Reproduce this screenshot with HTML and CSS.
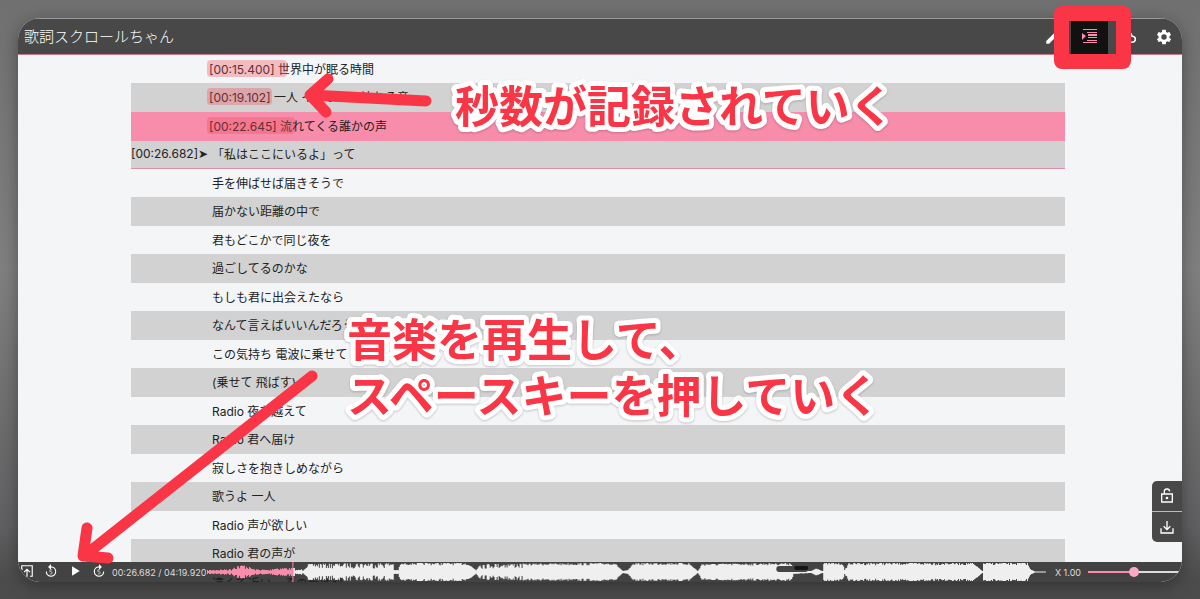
FILE: index.html
```html
<!DOCTYPE html>
<html lang="ja">
  <head>
    <meta charset="UTF-8" />
    <meta name="viewport" content="width=device-width, initial-scale=1.0" />
    <title>歌詞スクロールちゃん</title>

    <link rel="stylesheet" href="styles.css">
  </head>

  <body>
    <div class="app">
      <!-- Header -->
      <header class="header">
        <h1>歌詞スクロールちゃん</h1>
        <nav class="modes">
          <button class="mode" aria-label="編集">
            <svg viewBox="0 0 24 24"><path d="M3 17.200V21h3.800L17.800 9.900l-3.700-3.700L3 17.200zM20.700 7a1 1 0 0 0 0-1.400l-2.300-2.300a1 1 0 0 0-1.400 0l-1.800 1.800 3.700 3.700z" /></svg>
          </button>
          <button class="mode active" aria-label="タイミング">
            <svg viewBox="0 0 15 15"><path d="M1 0h14v1H1zM5 3h10v1H5zM6 5h9v2H6zM6 8h9v1H6zM5 11h10v1H5zM1 13h14v1H1zM0 4l4 3-4 4z" /></svg>
          </button>
          <button class="mode" aria-label="クラウド">
            <svg viewBox="0 0 24 24"><path d="M19.400 10A7.500 7.500 0 0 0 5.400 8 6 6 0 0 0 6 20h13a5 5 0 0 0 .4-10zM19 18H6a4 4 0 0 1 0-8h.7a5.500 5.500 0 0 1 10.800 1.500v.5H19a3 3 0 0 1 0 6z" /></svg>
          </button>
          <button class="mode" aria-label="設定">
            <svg viewBox="0 0 24 24"><path d="M19.140 12.940c.04-.3.06-.61.06-.94 0-.32-.02-.64-.07-.94l2.030-1.580c.18-.14.23-.41.12-.61l-1.920-3.320c-.12-.22-.37-.29-.59-.22l-2.390.96c-.5-.38-1.030-.7-1.620-.94l-.36-2.540c-.04-.24-.24-.41-.48-.41h-3.840c-.24 0-.43.17-.47.41l-.36 2.540c-.59.24-1.130.57-1.620.94l-2.390-.96c-.22-.08-.47 0-.59.22L2.740 8.870c-.12.21-.08.47.12.61l2.030 1.580c-.05.3-.09.63-.09.94s.02.64.07.94l-2.030 1.580c-.18.14-.23.41-.12.61l1.920 3.320c.12.22.37.29.59.22l2.390-.96c.5.38 1.030.7 1.620.94l.36 2.540c.05.24.24.41.48.41h3.840c.24 0 .44-.17.47-.41l.36-2.540c.59-.24 1.130-.56 1.620-.94l2.390.96c.22.08.47 0 .59-.22l1.920-3.320c.12-.22.07-.47-.12-.61l-2.010-1.580zM12 15.600A3.600 3.600 0 1 1 12 8.400a3.600 3.600 0 0 1 0 7.200z" /></svg>
          </button>
        </nav>
      </header>

      <!-- Lyrics -->
      <main class="content">
        <ol class="lyrics">
          <li class="stamped"><span class="line short">[00:15.400] 世界中が眠る時間</span></li>
          <li class="stamped"><span class="line tight">[00:19.102] 一人 イヤホンで流れる音</span></li>
          <li class="stamped current"><span class="line wide">[00:22.645] 流れてくる誰かの声</span></li>
          <li class="next"><span class="time">[00:26.682]➤</span>「私はここにいるよ」って</li>
          <li>手を伸ばせば届きそうで</li>
          <li>届かない距離の中で</li>
          <li>君もどこかで同じ夜を</li>
          <li>過ごしてるのかな</li>
          <li>もしも君に出会えたなら</li>
          <li>なんて言えばいいんだろう</li>
          <li>この気持ち 電波に乗せて</li>
          <li>(乗せて 飛ばす)</li>
          <li>Radio 夜を越えて</li>
          <li>Radio 君へ届け</li>
          <li>寂しさを抱きしめながら</li>
          <li>歌うよ 一人</li>
          <li>Radio 声が欲しい</li>
          <li>Radio 君の声が</li>
        </ol>

        <div class="side-buttons">
          <button aria-label="ロック解除">
            <svg viewBox="0 0 24 24"><path d="M4 9h16v12H4zM8 9V6a4 4 0 0 1 8-1" /><circle cx="12" cy="15" r="1" /></svg>
          </button>
          <button aria-label="ダウンロード">
            <svg viewBox="0 0 24 24"><path d="M3 14v7h18v-7M12 3v13M7 11l5 5 5-5" /></svg>
          </button>
        </div>
      </main>

      <!-- Player -->
      <footer class="player">
        <div class="controls">
          <button aria-label="音源を開く">
            <svg viewBox="0 0 24 24"><path d="M3 9V3h18v18h-4M3 9h2M12 22V10M7 14l5-5 5 5" /></svg>
          </button>
          <button aria-label="5秒戻る">
            <svg viewBox="0 0 24 24"><path d="M4 13a8 8 0 1 0 8-8" /><path class="solid" d="M12 0v10L7 5z" /><path class="digit" d="M14 10h-4v3h2a2 2 0 0 1 0 4h-2" /></svg>
          </button>
          <button aria-label="再生">
            <svg viewBox="0 0 24 24"><path class="solid" d="M7 4l13 8-13 8z" /></svg>
          </button>
          <button aria-label="5秒進む">
            <svg viewBox="0 0 24 24"><path d="M20 13a8 8 0 1 1-8-8" /><path class="solid" d="M12 0v10l5-5z" /><path class="digit" d="M14 10h-4v3h2a2 2 0 0 1 0 4h-2" /></svg>
          </button>
        </div>
        <span class="clock">00:26.682 / 04:19.920</span>
        <div class="wave">
          <span class="under-line">遠くて近い、その距離が</span>
          <svg viewBox="0 0 840 20" preserveAspectRatio="none">
            <path id="waveRest" class="rest" />
            <path id="wavePlayed" class="played" />
            <path class="cursor" d="M86 0v20" />
            <rect class="thumb" x="570" y="4" width="32" height="6" rx="3" />
            <rect class="thumb-end" x="588" y="4" width="14" height="4" rx="2" />
          </svg>
        </div>
        <label class="rate" for="rate">X 1.00</label>
        <input type="range" id="rate" min="0" max="2" step="0.01" value="1" />
      </footer>
    </div>

    <!-- Callouts -->
    <div class="callouts">
      <div class="frame"></div>
      <svg class="arrows" viewBox="0 0 1200 599">
        <path d="M426 101L310 95M328 79L310 95L326 112" />
        <path d="M312 376L84 556M87 528L83 556L108 558" />
        <text class="note" x="455" y="123">秒数が記録されていく</text>
        <text class="note note-large" x="347" y="357">音楽を再生して、</text>
        <text class="note note-large" x="347" y="413">スペースキーを押していく</text>
      </svg>
    </div>

    <script>
      // [x, height] pairs, interpolated between
      const envelope = [
        [0, 2], [24, 3], [28, 6], [38, 7], [46, 3], [62, 2], [66, 4], [88, 4],
        [89, 2], [96, 3], [99, 8], [186, 9], [187, 2], [191, 2], [193, 8],
        [200, 9], [260, 9], [269, 2], [273, 8], [408, 9], [416, 1], [421, 2],
        [427, 9], [482, 9], [491, 1], [495, 8], [585, 9], [587, 2], [604, 1],
        [610, 4], [616, 1], [617, 9], [636, 9], [638, 2], [642, 9], [766, 9],
        [774, 3], [776, 1], [777, 9], [821, 9], [824, 3], [830, 0], [840, 0],
      ];

      function heightAt(x) {
        let i = 1;
        while (i < envelope.length - 1 && envelope[i][0] < x) i++;
        const [x0, h0] = envelope[i - 1];
        const [x1, h1] = envelope[i];
        return h0 + ((h1 - h0) * (x - x0)) / (x1 - x0);
      }

      let played = "";
      let rest = "";
      let seed = 7;
      for (let x = 0; x < 840; x++) {
        seed = (seed * 16807) % 2147483647;
        const noise = seed / 2147483647;
        const busy = x < 186 || (x > 273 && x < 320);
        const drop = noise * noise * (busy ? 0.6 : 0.25);
        const h = Math.max(0.5, heightAt(x) * (1 - drop));
        const bar = `M${x} ${10 - h}h1v${h * 2}h-1z`;
        if (x < 86) played += bar;
        else rest += bar;
      }
      document.getElementById("wavePlayed").setAttribute("d", played);
      document.getElementById("waveRest").setAttribute("d", rest);
    </script>
  </body>
</html>
```
FILE: styles.css
```css
* {
  margin: 0;
  padding: 0;
  box-sizing: border-box;
}

body {
  position: relative;
  height: 100vh;
  padding: 18px 18px 17px;
  overflow: hidden;
  font-family: Inter, "Noto Sans CJK JP", sans-serif;
  font-size: 12px;
  color: #222;
  background: linear-gradient(#707070, #808080 45%, #606062 88%, #4c4c4c 97%);
}

button {
  border: none;
  background: none;
  color: inherit;
  cursor: pointer;
}

.app {
  display: flex;
  flex-direction: column;
  height: 100%;
  overflow: hidden;
  border-radius: 22px;
  background: #f3f5f7;
  box-shadow: 0 4px 18px rgba(0, 0, 0, 0.35);
}

/* Header */
.header {
  display: flex;
  flex: none;
  align-items: center;
  justify-content: space-between;
  height: 37px;
  padding-left: 6px;
  color: #fff;
  background: #484848;
  border-top: 1px solid #999;
  border-bottom: 1px solid #c87a8c;
}

.header h1 {
  padding-bottom: 2px;
  font-size: 15px;
  font-weight: 300;
}

.modes {
  display: flex;
  height: 100%;
}

.mode {
  display: flex;
  align-items: center;
  justify-content: center;
  width: 37px;
}

.mode svg {
  width: 18px;
  height: 18px;
  fill: currentColor;
}

.mode.active {
  color: #f78fab;
  background: #111;
}

.mode.active svg {
  width: 15px;
  height: 15px;
}

/* Lyrics */
.content {
  position: relative;
  flex: 1;
  min-height: 0;
  padding: 0 117px 0 113px;
  overflow: hidden;
}

.lyrics {
  list-style: none;
}

.lyrics li {
  display: flex;
  align-items: center;
  height: 28px;
  padding: 0 0 2px 81px;
  white-space: pre;
}

.lyrics li:nth-child(even) {
  height: 29px;
  background: #d2d2d2;
}

.lyrics li.stamped {
  padding-left: 76px;
}

.lyrics li.current {
  height: 29px;
  background: #f78cab;
}

.lyrics li.next {
  height: 28px;
  padding-left: 0;
  border-bottom: 1px solid #dc8fa4;
}

.time {
  width: 81px;
}

.line {
  position: relative;
  padding: 0 2px;
}

.line::before {
  content: "";
  position: absolute;
  inset: 0 auto 0 0;
  border-radius: 4px;
  background: rgba(240, 70, 85, 0.32);
}

.line.short::before {
  width: 80px;
}

.line.tight::before {
  width: 65px;
}

.line.wide::before {
  width: 88px;
}

.side-buttons {
  position: absolute;
  right: 0;
  bottom: 20px;
  width: 30px;
  overflow: hidden;
  color: #fff;
  background: #484848;
  border-radius: 5px 0 0 5px;
}

.side-buttons button {
  display: flex;
  align-items: center;
  justify-content: center;
  width: 100%;
  height: 30px;
}

.side-buttons button + button {
  height: 31px;
  border-top: 1px solid #bbb;
}

.side-buttons svg {
  width: 16px;
  height: 16px;
  fill: none;
  stroke: currentColor;
  stroke-width: 2;
}

/* Player */
.player {
  display: flex;
  flex: none;
  align-items: center;
  height: 20px;
  padding-right: 3px;
  color: #ddd;
  background: #434343;
}

.controls {
  display: flex;
  gap: 6px;
}

.controls button {
  display: flex;
  align-items: center;
  justify-content: center;
  width: 18px;
  height: 20px;
  padding-bottom: 2px;
}

.controls svg {
  width: 14px;
  height: 14px;
  fill: none;
  stroke: #fff;
  stroke-width: 2;
}

.controls .solid {
  fill: #fff;
  stroke: none;
}

.controls .digit {
  stroke-width: 1;
}

.clock {
  width: 95px;
  margin-left: 4px;
  font-size: 9px;
  white-space: nowrap;
}

.wave {
  position: relative;
  flex: 1;
  height: 20px;
  overflow: hidden;
}

.wave svg {
  position: relative;
  display: block;
  width: 100%;
  height: 100%;
}

.under-line {
  position: absolute;
  top: 12px;
  left: 5px;
  color: #1c1c1c;
}

.rest {
  fill: #efefef;
}

.played {
  fill: #f78cab;
}

.cursor {
  stroke: #f78cab;
}

.thumb {
  fill: #444;
}

.thumb-end {
  fill: #151515;
}

.rate {
  padding: 0 7px 0 9px;
  font-size: 9px;
}

#rate {
  width: 91px;
  height: 12px;
  appearance: none;
  background: linear-gradient(90deg, #f78cab 50%, #ddd 50%) center / 100% 2px no-repeat;
}

#rate::-webkit-slider-thumb {
  appearance: none;
  width: 10px;
  height: 10px;
  border-radius: 50%;
  background: #fbaac6;
}

/* Callouts */
.callouts {
  position: absolute;
  inset: 0;
  pointer-events: none;
}

.frame {
  position: absolute;
  top: 6px;
  right: 69px;
  width: 77px;
  height: 63px;
  border: 15px solid #fa3545;
  border-radius: 8px;
}

.arrows {
  position: absolute;
  width: 100%;
  fill: none;
  stroke: #fa3545;
  stroke-width: 11;
  stroke-linecap: round;
  stroke-linejoin: round;
}

.note {
  font-family: "Noto Sans CJK JP", sans-serif;
  font-size: 44px;
  font-weight: 700;
  fill: #fa3545;
  stroke: #fff;
  stroke-width: 10;
  paint-order: stroke fill;
  filter: drop-shadow(0 1px 1px rgba(0, 0, 0, 0.2));
}

.note-large {
  font-size: 45px;
}
```
